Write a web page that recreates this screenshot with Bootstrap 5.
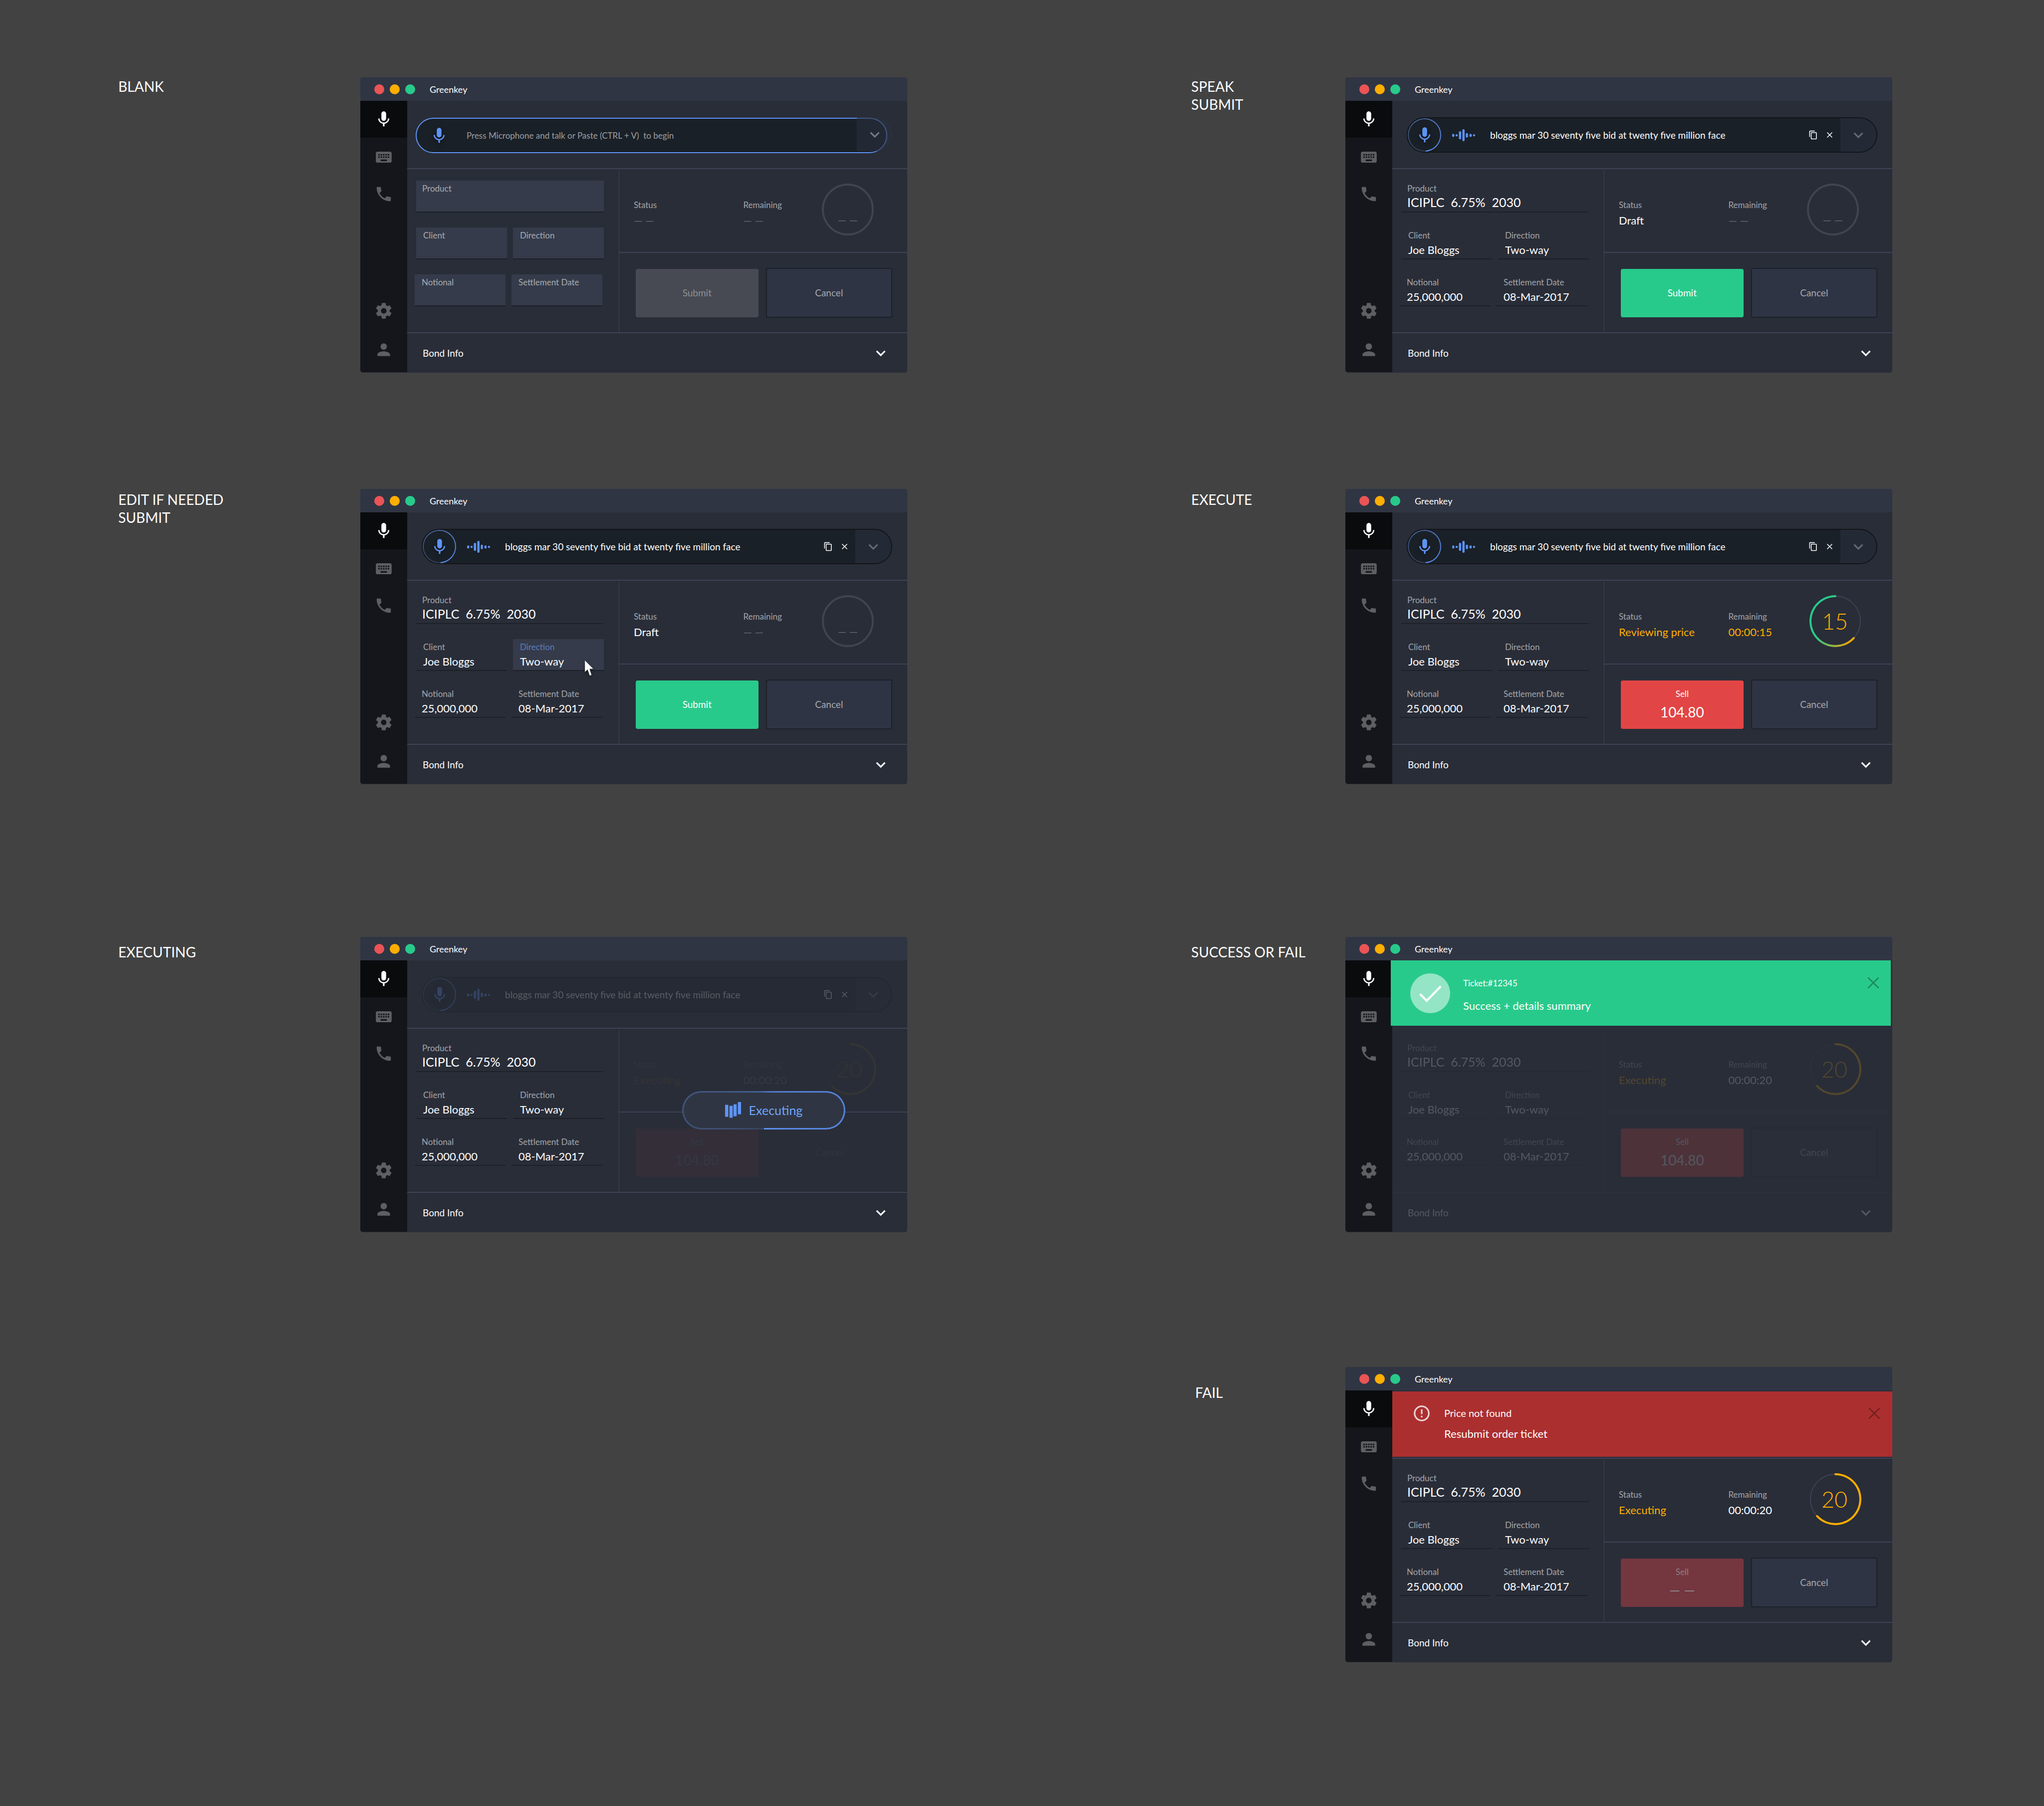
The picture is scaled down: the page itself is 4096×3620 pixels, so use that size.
<!DOCTYPE html>
<html lang="en">
<head>
<meta charset="utf-8">
<meta name="viewport" content="width=device-width, initial-scale=1">
<title>Greenkey – order ticket states</title>
<link href="https://cdn.jsdelivr.net/npm/bootstrap@5.3.0/dist/css/bootstrap.min.css" rel="stylesheet">
<style>
:root{--panel:#292d38;--rule:#3d4455;--well:#1a2027;--blue:#5e94f5;--green:#28ca8b;--amber:#ffae00;--dim:rgba(255,255,255,.58)}
body{background:#424242;color:#fff;font-family:Lato,"Open Sans",sans-serif;font-size:19px;line-height:24px}
button,input{font-family:inherit}
svg{display:block;flex:none}
.ico{width:38px;height:38px;fill:currentColor}
.ico-sm{width:19px;height:19px;fill:currentColor}

/* storyboard */
.storyboard{padding:155px 0 288px}
.step-row{display:grid;grid-template-columns:237fr 485fr 1096fr 569fr 309fr 1096fr 304fr}
.step-row>.cap-a{grid-column:2}.step-row>.win-a{grid-column:3}
.step-row>.cap-b{grid-column:5}.step-row>.win-b{grid-column:6}
.step-cap{font-size:28px;line-height:36px;font-weight:400;margin:0}
.gap-1st{margin-bottom:233px}.gap-2nd{margin-bottom:306px}.gap-3rd{margin-bottom:270px}
.drop-1{padding-top:3px}.drop-2{padding-top:12px}.drop-3{padding:33px 0 0 8px}

/* window */
.win{background:var(--panel);border-radius:5px;min-width:0}
.win-bar{height:47px;background:#303543;border-radius:5px 5px 0 0;padding:0 28px;gap:11px}
.win-name{font-size:18px;margin-left:18px}
.light{width:20px;height:20px;border-radius:50%}
.light.stop{background:#ea5455}.light.hold{background:var(--amber)}.light.grow{background:var(--green)}
.side{width:94px;background:#15161b;border-radius:0 0 0 5px;color:#5d5f63;padding-bottom:26px;margin-bottom:1px}
.side button{background:none;border:0;padding:0;color:inherit;display:flex;justify-content:center;align-items:center;width:100%}
.side .on{background:#0a0b0d;color:#fff;height:74px;margin-bottom:20px}
.side .calls{margin:36px 0 auto}
.side .setup{margin-bottom:40px}
.pane{min-width:0}

/* voice bar */
.voice{height:137px;border-bottom:2px solid var(--rule);padding:33px 30px 0 29px}
.voice-idle{padding:34px 29px 0 17px}
.pill{height:71px;border:2px solid #131519;border-radius:36px;background:var(--well);overflow:hidden}
.pill input{background:none;border:0;outline:0;color:#fff;font-size:19px;line-height:24px;min-width:0;padding:0}
.pill input::placeholder{color:#9c9fa2;opacity:1}
.pill button{border:0;background:none;color:#fff;padding:0}
.pill .more{width:72px;align-self:stretch;background:#232a35;color:#646b75}
.mic-ring{width:67px;height:67px;border-radius:50%;padding:2px;background:conic-gradient(from 175deg,#343d52,#5e94f5)}
.mic-ring button{width:63px;height:63px;border-radius:50%;background:var(--well);color:var(--blue)}
.pill .mic-idle{color:var(--blue);margin:0 36px 0 26px}
.mic-ico{filter:drop-shadow(0 3px 4px rgba(0,0,0,.5))}
.wave{margin:0 30px 0 22px}
.acts{gap:14px;padding-right:12px}
.pill-idle{border-color:var(--blue);margin-right:11px}
.pill-idle input{font-size:17px}
.more-idle{width:72px;height:67px;margin-left:-72px;border:0;border-radius:0 34px 34px 0;background:rgba(42,48,61,.6);color:#747a83;position:relative}

/* ticket */
.ticket{height:327px}
.fields{width:424px;padding:23px 30px 0 18px;gap:30px}
.field-line{gap:12px}
.field-line.third{margin:0 3px 0 -3px}
.divider{width:1px;background:var(--rule);margin-top:2px}
.slot{flex:1 1 0;min-width:0;border-bottom:2px solid #1c2028;padding:6px 14px 4px}
.slot.big{padding-left:12px}
.slot label{display:block;font-size:17px;line-height:20px;color:var(--dim)}
.slot input{display:block;width:100%;height:26px;margin-top:6px;padding:0;border:0;background:none;outline:0;color:#fff;font-size:22px;line-height:26px}
.slot.big input{height:30px;margin-top:2px;font-size:25px;line-height:30px}
.slot.fill{background:#353b4a}
.slot.hot{background:#353b4a;position:relative}
.slot.hot label{color:#5d7dbb}
.pointer{position:absolute;left:144px;top:43px;filter:drop-shadow(0 3px 3px rgba(0,0,0,.5))}
.deal{position:relative;min-width:0}
.stats{height:168px;border-bottom:2px solid var(--rule)}
.stats-in{display:grid;grid-template-columns:219fr 155fr 173fr;padding-left:29px}
.stat{padding-top:62px}
.stat-l{font-size:17px;line-height:20px;color:var(--dim);margin-bottom:8px}
.stat-v{font-size:22px;line-height:26px}
.none{color:#6a6d76}
.amber{color:var(--amber)}
.ring{margin-top:27px}
.ring text{font-family:Lato,sans-serif;text-anchor:middle}
.deal-btns{padding:30px 30px 0 33px;gap:15px}
.act{flex:247 1 0;height:97px;border:0;border-radius:4px;color:#fff;font-size:19px;line-height:24px}
.act-go{background:var(--green)}
.act-off{background:#474a52;color:#8e9196}
.act-sell{background:#e24545;gap:9px}
.act-lost{background:#74363f;color:#8f8086}
.act .side-l{font-size:17px;line-height:20px}
.act .px{font-size:28px;line-height:34px}
.act-no{flex:251 1 0;height:100px;background:#2f3444;border:2px solid #1c2029;color:#a5a8af}
.bond{border:0;border-top:2px solid var(--rule);background:none;color:#fff;height:81px;width:100%;padding:0 34px 0 31px;font-size:19px;border-radius:0 0 5px 0}
.fade-bar{opacity:.22}.fade-deal{opacity:.05}.fade-all{opacity:.2}
.busy{position:absolute;left:126px;top:125px;width:327px;height:77px;border-radius:39px;padding:3px;background:conic-gradient(from 180deg,#36425a,#40547a 25%,#45649c 48%,#5078c8 56%,#5e94f5)}
.busy-in{background:#303543;border-radius:36px;height:71px;padding-bottom:2px;color:#6ea5fb;font-size:25px;line-height:30px;gap:16px}

/* result banners */
.note-wrap{height:137px;border-bottom:2px solid var(--rule)}
.note-wrap.soft{border-color:#2d303d}
.note{height:131px;position:relative}
.note-ok{background:var(--green);margin:0 3px 0 -3px;padding:26px 16px 0 39px}
.note-bad{background:#ac2f2f;margin-top:2px;padding:25px 17px 0 40px}
.note-body{margin-left:26px}
.note-ok .note-body{padding-top:10px}
.note-bad .note-body{padding-top:6px}
.note-x{background:none;border:0;padding:0;opacity:.3;color:#000}
.tick-l{font-size:17px;line-height:20px;margin-bottom:22px}
.msg{font-size:22px;line-height:26px}
.msg-s{font-size:20px;line-height:24px;margin-bottom:17px}
</style>
<script src="https://cdn.jsdelivr.net/npm/bootstrap@5.3.0/dist/js/bootstrap.bundle.min.js"></script>
</head>
<body>
<svg width="0" height="0" class="position-absolute" aria-hidden="true">
  <symbol id="mic" viewBox="0 0 24 24"><path d="M12 14c1.66 0 2.99-1.34 2.99-3L15 5c0-1.66-1.34-3-3-3S9 3.340 9 5v6c0 1.660 1.340 3 3 3zm5.300-3c0 3-2.540 5.100-5.300 5.100S6.700 14 6.700 11H5c0 3.410 2.720 6.230 6 6.720V21h2v-3.280c3.280-.480 6-3.300 6-6.720h-1.700z"/></symbol>
  <symbol id="kbd" viewBox="0 0 24 24"><path d="M20 5H4c-1.100 0-1.990.900-1.990 2L2 17c0 1.100.900 2 2 2h16c1.100 0 2-.900 2-2V7c0-1.100-.900-2-2-2zm-9 3h2v2h-2V8zm0 3h2v2h-2v-2zM8 8h2v2H8V8zm0 3h2v2H8v-2zm-1 2H5v-2h2v2zm0-3H5V8h2v2zm9 7H8v-2h8v2zm0-4h-2v-2h2v2zm0-3h-2V8h2v2zm3 3h-2v-2h2v2zm0-3h-2V8h2v2z"/></symbol>
  <symbol id="tel" viewBox="0 0 24 24"><path d="M6.620 10.790c1.440 2.830 3.760 5.140 6.590 6.590l2.200-2.200c.270-.270.670-.360 1.020-.240 1.120.370 2.330.570 3.570.570.550 0 1 .450 1 1V20c0 .550-.450 1-1 1-9.390 0-17-7.610-17-17 0-.550.450-1 1-1h3.500c.550 0 1 .450 1 1 0 1.250.200 2.450.570 3.570.110.350.030.740-.250 1.020l-2.200 2.200z"/></symbol>
  <symbol id="gear" viewBox="0 0 24 24"><path d="M19.430 12.980c.040-.320.070-.640.070-.980s-.030-.660-.070-.980l2.110-1.650c.190-.150.240-.420.120-.640l-2-3.460c-.120-.220-.390-.300-.610-.220l-2.490 1c-.520-.400-1.080-.730-1.690-.980l-.380-2.650C14.460 2.180 14.250 2 14 2h-4c-.250 0-.460.180-.490.420l-.380 2.650c-.610.250-1.170.590-1.690.980l-2.490-1c-.230-.090-.490 0-.610.220l-2 3.460c-.130.220-.070.490.120.640l2.110 1.650c-.040.320-.070.650-.070.980s.030.660.070.980l-2.110 1.650c-.190.150-.240.420-.120.640l2 3.460c.120.220.390.300.610.220l2.490-1c.520.400 1.080.730 1.690.980l.380 2.650c.030.240.240.420.490.420h4c.250 0 .460-.180.490-.420l.380-2.650c.610-.250 1.170-.590 1.690-.980l2.490 1c.230.090.490 0 .610-.220l2-3.460c.120-.220.070-.490-.120-.640l-2.110-1.650zM12 15.500c-1.930 0-3.500-1.570-3.500-3.500s1.570-3.500 3.500-3.500 3.500 1.570 3.500 3.500-1.570 3.500-3.500 3.500z"/></symbol>
  <symbol id="user" viewBox="0 0 24 24"><path d="M12 12c2.210 0 4-1.790 4-4s-1.790-4-4-4-4 1.790-4 4 1.790 4 4 4zm0 2c-2.670 0-8 1.340-8 4v2h16v-2c0-2.660-5.330-4-8-4z"/></symbol>
  <symbol id="down" viewBox="0 0 24 24"><path d="M16.590 8.590L12 13.170 7.410 8.590 6 10l6 6 6-6z"/></symbol>
  <symbol id="copy" viewBox="0 0 24 24"><path d="M16 1H4c-1.100 0-2 .900-2 2v14h2V3h12V1zm3 4H8c-1.100 0-2 .900-2 2v14c0 1.100.900 2 2 2h11c1.100 0 2-.900 2-2V7c0-1.100-.900-2-2-2zm0 16H8V7h11v14z"/></symbol>
  <symbol id="cross" viewBox="0 0 24 24"><path d="M19 6.410L17.590 5 12 10.590 6.410 5 5 6.410 10.590 12 5 17.590 6.410 19 12 13.410 17.590 19 19 17.590 13.410 12z"/></symbol>
  <symbol id="thin-x" viewBox="0 0 24 24"><path d="M5.300 5.300l13.400 13.400M18.700 5.300l-13.400 13.400" stroke="currentColor" stroke-width="1.800" fill="none"/></symbol>
  <symbol id="warn" viewBox="0 0 24 24"><path d="M11 15h2v2h-2zm0-8h2v6h-2zm.990-5C6.470 2 2 6.480 2 12s4.470 10 9.990 10C17.520 22 22 17.520 22 12S17.520 2 11.990 2zM12 20c-4.420 0-8-3.580-8-8s3.580-8 8-8 8 3.580 8 8-3.580 8-8 8z"/></symbol>
  <symbol id="wave" viewBox="0 0 58 30"><rect x="0" y="11.500" width="5.500" height="8" rx="2.700"/><rect x="8.700" y="12.500" width="5.300" height="5.600" rx="2.600"/><rect x="17" y="5" width="5.700" height="20.300" rx="2.800"/><rect x="25.800" y="0" width="5.700" height="30" rx="2.800"/><rect x="34.500" y="9.700" width="5.500" height="11.500" rx="2.700"/><rect x="43.800" y="11.500" width="5.500" height="8" rx="2.700"/><rect x="52.600" y="12.500" width="5.400" height="5.600" rx="2.700"/></symbol>
  <linearGradient id="sweep" gradientUnits="userSpaceOnUse" x1="25" y1="75" x2="92" y2="100"><stop offset="0" stop-color="#28ca8b"/><stop offset="1" stop-color="#ffa500"/></linearGradient>
</svg>

<main class="storyboard" id="board"></main>

<script>
const ico = (n, c = 'ico') => `<svg class="${c}" aria-hidden="true"><use href="#${n}"/></svg>`;

const voiceBar = (s) => s.idle
  ? `<div class="voice voice-idle d-flex align-items-start">
       <div class="pill pill-idle d-flex align-items-center flex-grow-1">
         <button type="button" class="mic-idle" aria-label="Talk">${ico('mic','ico mic-ico')}</button>
         <input class="flex-grow-1" type="text" aria-label="Request" placeholder="Press Microphone and talk or Paste (CTRL + V)&nbsp; to begin">
       </div>
       <button type="button" class="more-idle d-flex align-items-center justify-content-center" aria-label="More">${ico('down')}</button>
     </div>`
  : `<div class="voice"><div class="pill d-flex align-items-center ${s.busy ? 'fade-bar' : ''}">
       <div class="mic-ring"><button type="button" class="d-flex align-items-center justify-content-center" aria-label="Talk">${ico('mic','ico mic-ico')}</button></div>
       <svg class="wave" width="46" height="24" fill="#5e94f5" aria-hidden="true"><use href="#wave"/></svg>
       <input class="flex-grow-1" type="text" aria-label="Request" value="bloggs mar 30 seventy five bid at twenty five million face">
       <div class="acts d-flex align-items-center"><button type="button" aria-label="Copy">${ico('copy','ico-sm')}</button><button type="button" aria-label="Clear">${ico('cross','ico-sm')}</button></div>
       <button type="button" class="more d-flex align-items-center justify-content-center" aria-label="More">${ico('down')}</button>
     </div></div>`;

const banner = {
  ok: `<div class="note-wrap soft"><div class="note note-ok d-flex align-items-start" role="alert">
        <svg width="80" height="80" viewBox="0 0 102 102"><circle cx="51" cy="51" r="51" fill="#fff" fill-opacity=".5"/><path d="M25 53l17 17 36-37" fill="none" stroke="#fff" stroke-width="5.500"/></svg>
        <div class="note-body flex-grow-1"><div class="tick-l">Ticket:#12345</div><div class="msg">Success + details summary</div></div>
        <button type="button" class="note-x" aria-label="Close">${ico('thin-x')}</button></div></div>`,
  bad: `<div class="note-wrap d-flex flex-column"><div class="note note-bad d-flex align-items-start" role="alert">
        <svg class="ico" fill-opacity=".8" aria-hidden="true"><use href="#warn"/></svg>
        <div class="note-body flex-grow-1"><div class="msg-s">Price not found</div><div class="msg">Resubmit order ticket</div></div>
        <button type="button" class="note-x" aria-label="Close">${ico('thin-x')}</button></div></div>`
};

const rings = {
  none: `<circle cx="54" cy="54" r="50" fill="none" stroke="#41444f" stroke-width="4"/><text x="54" y="83" font-size="22" fill="#6a6d76">— —</text>`,
  r15: `<circle cx="59" cy="54" r="50" fill="none" stroke="#3d4255" stroke-width="2"/><path d="M59 4A50 50 0 1 0 95.800 87.900" fill="none" stroke="url(#sweep)" stroke-width="4" stroke-linecap="round"/><text x="58" y="71" font-size="45" font-weight="300" fill="#ffae00">15</text>`,
  r20: `<circle cx="59" cy="54" r="50" fill="none" stroke="#3d4255" stroke-width="2"/><path d="M59 4A50 50 0 1 1 22.200 87.900" fill="none" stroke="#ffae00" stroke-width="4" stroke-linecap="round"/><text x="57" y="71" font-size="45" font-weight="300" fill="#ffae00">20</text>`
};

const go = {
  off: `<button type="button" class="act act-off" disabled>Submit</button>`,
  submit: `<button type="button" class="act act-go">Submit</button>`,
  sell: `<button type="button" class="act act-sell d-flex flex-column align-items-center justify-content-center"><span class="side-l">Sell</span><span class="px">104.80</span></button>`,
  lost: `<button type="button" class="act act-sell act-lost d-flex flex-column align-items-center justify-content-center"><span class="side-l">Sell</span><span class="px">— —</span></button>`
};

const slot = (s, id, name, value, cls = '') => `<div class="slot ${cls} ${s.idle ? 'fill' : ''}"><label for="${s.id}-${id}">${name}</label><input type="text" id="${s.id}-${id}" value="${s.idle ? '' : value}">${
  cls === 'hot' ? '<svg class="pointer" width="17" height="31" viewBox="0 0 21 39" fill="#fff"><path d="M0 0l20.500 20.500-9 .700 5 15-4.300 1.800-5.500-15.300L0 28.500z"/></svg>' : ''}</div>`;

const win = (s) => `<section class="win ${s.col}">
  <header class="win-bar d-flex align-items-center"><span class="light stop"></span><span class="light hold"></span><span class="light grow"></span><span class="win-name">Greenkey</span></header>
  <div class="d-flex">
    <nav class="side d-flex flex-column flex-shrink-0">
      <button type="button" class="on" aria-label="Voice">${ico('mic')}</button>
      <button type="button" aria-label="Keyboard">${ico('kbd')}</button>
      <button type="button" class="calls" aria-label="Calls">${ico('tel')}</button>
      <button type="button" class="setup" aria-label="Settings">${ico('gear')}</button>
      <button type="button" aria-label="Account">${ico('user')}</button>
    </nav>
    <div class="pane flex-grow-1">
      ${s.note ? banner[s.note] : voiceBar(s)}
      <div class="${s.note === 'ok' ? 'fade-all' : ''}">
        <div class="ticket d-flex">
          <form class="fields d-flex flex-column flex-shrink-0">
            <div class="field-line d-flex">${slot(s,'product','Product','ICIPLC&nbsp; 6.75%&nbsp; 2030','big')}</div>
            <div class="field-line d-flex">${slot(s,'client','Client','Joe Bloggs')}${slot(s,'direction','Direction','Two-way', s.hot ? 'hot' : '')}</div>
            <div class="field-line third d-flex">${slot(s,'notional','Notional','25,000,000')}${slot(s,'settle','Settlement Date','08-Mar-2017')}</div>
          </form>
          <div class="divider"></div>
          <div class="deal flex-grow-1">
            <div class="stats"><div class="stats-in ${s.busy ? 'fade-deal' : ''}">
              <div class="stat"><div class="stat-l">Status</div><div class="stat-v ${s.sc}">${s.status}</div></div>
              <div class="stat"><div class="stat-l">Remaining</div><div class="stat-v ${s.rc}">${s.left}</div></div>
              <svg class="ring" width="120" height="112" viewBox="0 0 120 112">${rings[s.ring]}</svg>
            </div></div>
            <div class="deal-btns d-flex align-items-center ${s.busy ? 'fade-deal' : ''}">${go[s.go]}<button type="button" class="act act-no">Cancel</button></div>
            ${s.busy ? `<div class="busy" role="status"><div class="busy-in d-flex align-items-center justify-content-center"><svg width="32" height="32" viewBox="0 0 40 40" fill="#5e94f5"><path d="M0 7h8v30H0zM11 9.500h8v30h-8zM21 5.500h8v30h-8zM32 0h8v30.500h-8z"/></svg><span>Executing</span></div></div>` : ''}
          </div>
        </div>
        <button type="button" class="bond d-flex align-items-center justify-content-between"><span>Bond Info</span>${ico('down')}</button>
      </div>
    </div>
  </div>
</section>`;

const none = {status:'— —', sc:'none', left:'— —', rc:'none', ring:'none'};
const run = {status:'Executing', sc:'amber', left:'00:00:20', rc:'', ring:'r20'};
const S = {
  blank:   {id:'blank', col:'win-a', idle:true, ...none, go:'off'},
  speak:   {id:'speak', col:'win-b', ...none, status:'Draft', sc:'', go:'submit'},
  edit:    {id:'edit', col:'win-a', hot:true, ...none, status:'Draft', sc:'', go:'submit'},
  execute: {id:'execute', col:'win-b', status:'Reviewing price', sc:'amber', left:'00:00:15', rc:'amber', ring:'r15', go:'sell'},
  busy:    {id:'busy', col:'win-a', busy:true, ...run, go:'sell'},
  done:    {id:'done', col:'win-b', note:'ok', ...run, go:'sell'},
  fail:    {id:'fail', col:'win-b', note:'bad', ...run, go:'lost'}
};
const cap = (c, t, d = '') => `<h2 class="step-cap ${c} ${d}">${t}</h2>`;

document.getElementById('board').innerHTML = `
  <div class="step-row gap-1st">${cap('cap-a','BLANK')}${win(S.blank)}${cap('cap-b','SPEAK<br>SUBMIT')}${win(S.speak)}</div>
  <div class="step-row gap-2nd">${cap('cap-a','EDIT IF NEEDED<br>SUBMIT','drop-1')}${win(S.edit)}${cap('cap-b','EXECUTE','drop-1')}${win(S.execute)}</div>
  <div class="step-row gap-3rd">${cap('cap-a','EXECUTING','drop-2')}${win(S.busy)}${cap('cap-b','SUCCESS OR FAIL','drop-2')}${win(S.done)}</div>
  <div class="step-row">${cap('cap-b','FAIL','drop-3')}${win(S.fail)}</div>`;
</script>
</body>
</html>
